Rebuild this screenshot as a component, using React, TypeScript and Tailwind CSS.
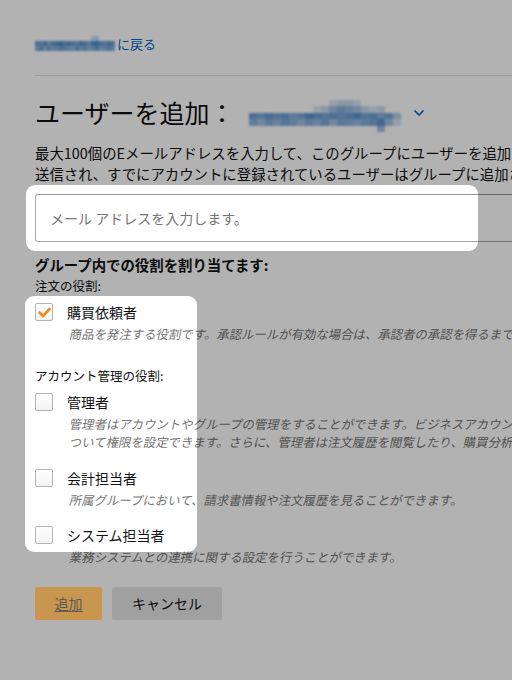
import { ChevronDown } from "lucide-react";

const JP = "font-['Noto_Sans_CJK_JP','Noto_Sans',sans-serif]";

// pixelated blur used to hide group names
function Mosaic({ cells, cell, className }: { cells: string[][]; cell: string; className?: string }) {
  return (
    <div className={`flex flex-col shrink-0 blur-[1.2px] ${className ?? ""}`}>
      {cells.map((row, i) => (
        <div key={i} className="flex">
          {row.map((c, j) => (
            <div key={j} className={`shrink-0 ${cell}`} style={{ backgroundColor: c }} />
          ))}
        </div>
      ))}
    </div>
  );
}

const W = "transparent";

const LINK_CELLS = [
  [W, W, W, W, W, W, W, W, W, W, W, W, W, W, "#c9dcef", "#c9dcef", W, W, W, W],
  ["#6f9fd3", "#7aa8d8", "#5d93cf", "#86b0dc", "#6a9cd2", "#5b91cd", "#4f89c9", "#6a9cd2", "#5e94cf", "#6f9fd3", "#7aa8d8", "#5d93cf", "#6a9cd2", "#86b0dc", "#5b91cd", "#4f89c9", "#6a9cd2", "#7aa8d8", "#5e94cf", "#6f9fd3"],
  ["#8ab3de", "#6f9fd3", "#93b9e1", "#7aa8d8", "#8ab3de", "#80acdb", "#6f9fd3", "#7aa8d8", "#86b0dc", "#93b9e1", "#6f9fd3", "#8ab3de", "#7aa8d8", "#93b9e1", "#86b0dc", "#6f9fd3", "#93b9e1", "#86b0dc", "#7aa8d8", "#8ab3de"],
];

const HEAD_CELLS = [
  [W, W, W, W, W, W, W, W, W, W, "#d8e6f4", "#c8dbef", "#c8dbef", "#d8e6f4", W, W, W, W, W, W],
  [W, W, W, W, W, W, W, W, "#d8e6f4", "#c8dbef", "#9fc0e4", "#86b0dc", "#93b9e1", "#a4c3e5", "#c8dbef", "#d8e6f4", "#c8dbef", W, W, W],
  ["#6f9fd3", "#7aa8d8", "#6a9cd2", "#7aa8d8", "#6f9fd3", "#86b0dc", "#7aa8d8", "#5e94cf", "#6a9cd2", "#7aa8d8", "#6f9fd3", "#7aa8d8", "#6f9fd3", "#5e94cf", "#7aa8d8", "#6f9fd3", "#86b0dc", "#7aa8d8", "#b3cde9", W],
  ["#8ab3de", "#a4c3e5", "#86b0dc", "#93b9e1", "#7aa8d8", "#8ab3de", "#9fc0e4", "#86b0dc", "#93b9e1", "#7aa8d8", "#a4c3e5", "#86b0dc", "#8ab3de", "#93b9e1", "#86b0dc", "#7aa8d8", "#5e94cf", "#a4c3e5", "#d8e6f4", W],
  [W, W, W, W, W, W, W, W, W, W, W, W, W, W, W, W, "#9fc0e4", W, W, W],
];

function Checkbox({ checked }: { checked?: boolean }) {
  return (
    <div className="w-[18px] h-[18px] shrink-0 border border-[#b4b4b4] rounded-[2px] bg-gradient-to-b from-white to-[#f3f3f3] flex items-center justify-center">
      {checked && (
        <svg width="13" height="11" viewBox="0 0 13 11">
          <path d="M1.5 5.5 L5 9 L11.5 2" fill="none" stroke="#f08a1c" strokeWidth="2.6" strokeLinecap="round" strokeLinejoin="round" />
        </svg>
      )}
    </div>
  );
}

function Role({ label, desc, checked }: { label: string; desc: string[]; checked?: boolean }) {
  return (
    <div>
      <div className="flex items-center h-[20px] gap-[14px]">
        <Checkbox checked={checked} />
        <span className="text-[14px] text-[#111]">{label}</span>
      </div>
      <div className="pl-[33px] mt-[3px] text-[12.4px] leading-[18px] text-[#767676] whitespace-nowrap">
        {desc.map((d) => (
          <div key={d} className="origin-bottom-left -skew-x-12">
            {d}
          </div>
        ))}
      </div>
    </div>
  );
}

export default function App() {
  return (
    <div className={`relative w-[512px] h-[680px] overflow-hidden bg-white ${JP}`}>
      <div className="w-[720px] pl-[35px] pt-[36px]">
        <div className="flex items-center h-[16px]">
          <Mosaic cells={LINK_CELLS} cell="w-[4px] h-[5px]" className="-mt-[2px] w-[82px] overflow-hidden" />
          <a className="text-[13px] text-[#0066c0] leading-[16px]">に戻る</a>
        </div>

        <div className="mt-[23px] border-t border-[#dddddd]" />

        <div className="mt-[20px] flex items-center h-[32px]">
          <h1 className="text-[25px] leading-[32px] text-[#111] font-normal">ユーザーを追加：</h1>
          <Mosaic cells={HEAD_CELLS} cell="w-[8px] h-[6.5px]" className="ml-[14px] mt-[8px] w-[160px] overflow-hidden" />
          <ChevronDown className="ml-[2px] mt-[2px] w-[16px] h-[16px] text-[#0066c0]" strokeWidth={2.6} />
        </div>

        <div className="mt-[14px] text-[14.4px] leading-[21px] text-[#111] whitespace-nowrap">
          <div>最大100個のEメールアドレスを入力して、このグループにユーザーを追加します。招待状が</div>
          <div>送信され、すでにアカウントに登録されているユーザーはグループに追加されます。</div>
        </div>

        <div className="mt-[10px] h-[48px] w-[600px] border border-[#a6a6a6] border-t-[#949494] rounded-[3px] flex items-center pl-[14px] text-[14px] text-[#767676]">
          メール アドレスを入力します。
        </div>

        <div className="mt-[13px] text-[14.4px] leading-[20px] font-bold text-[#111]">グループ内での役割を割り当てます:</div>
        <div className="mt-[2px] text-[12.5px] leading-[18px] text-[#111]">注文の役割:</div>

        <div className="mt-[7px]">
          <Role checked label="購買依頼者" desc={["商品を発注する役割です。承認ルールが有効な場合は、承認者の承認を得るまで発注できません。"]} />
        </div>

        <div className="mt-[24px] text-[12.5px] leading-[18px] text-[#111]">アカウント管理の役割:</div>

        <div className="mt-[7px]">
          <Role
            label="管理者"
            desc={[
              "管理者はアカウントやグループの管理をすることができます。ビジネスアカウントの設定に",
              "ついて権限を設定できます。さらに、管理者は注文履歴を閲覧したり、購買分析を行えます。",
            ]}
          />
        </div>
        <div className="mt-[17px]">
          <Role label="会計担当者" desc={["所属グループにおいて、請求書情報や注文履歴を見ることができます。"]} />
        </div>
        <div className="mt-[16px]">
          <Role label="システム担当者" desc={["業務システムとの連携に関する設定を行うことができます。"]} />
        </div>

        <div className="mt-[21px] flex gap-[10px]">
          <button type="button" className="relative z-10 w-[67px] h-[33px] bg-[#c8964f] rounded-[2px] text-[14px] text-[#5a5a5a] underline underline-offset-2">
            追加
          </button>
          <button type="button" className="w-[110px] h-[33px] bg-[#e6e6e6] rounded-[2px] text-[14px] text-[#111]">
            キャンセル
          </button>
        </div>
      </div>

      {/* tutorial dimming layer with two spotlight holes */}
      <svg className="absolute inset-0 pointer-events-none" width="512" height="680">
        <defs>
          <mask id="holes">
            <rect x="0" y="0" width="512" height="680" fill="white" />
            <rect x="26" y="185" width="452" height="66" rx="9" fill="black" />
            <rect x="25" y="296" width="172" height="256" rx="9" fill="black" />
          </mask>
        </defs>
        <rect x="0" y="0" width="512" height="680" fill="rgba(0,0,0,0.3)" mask="url(#holes)" />
      </svg>
    </div>
  );
}
